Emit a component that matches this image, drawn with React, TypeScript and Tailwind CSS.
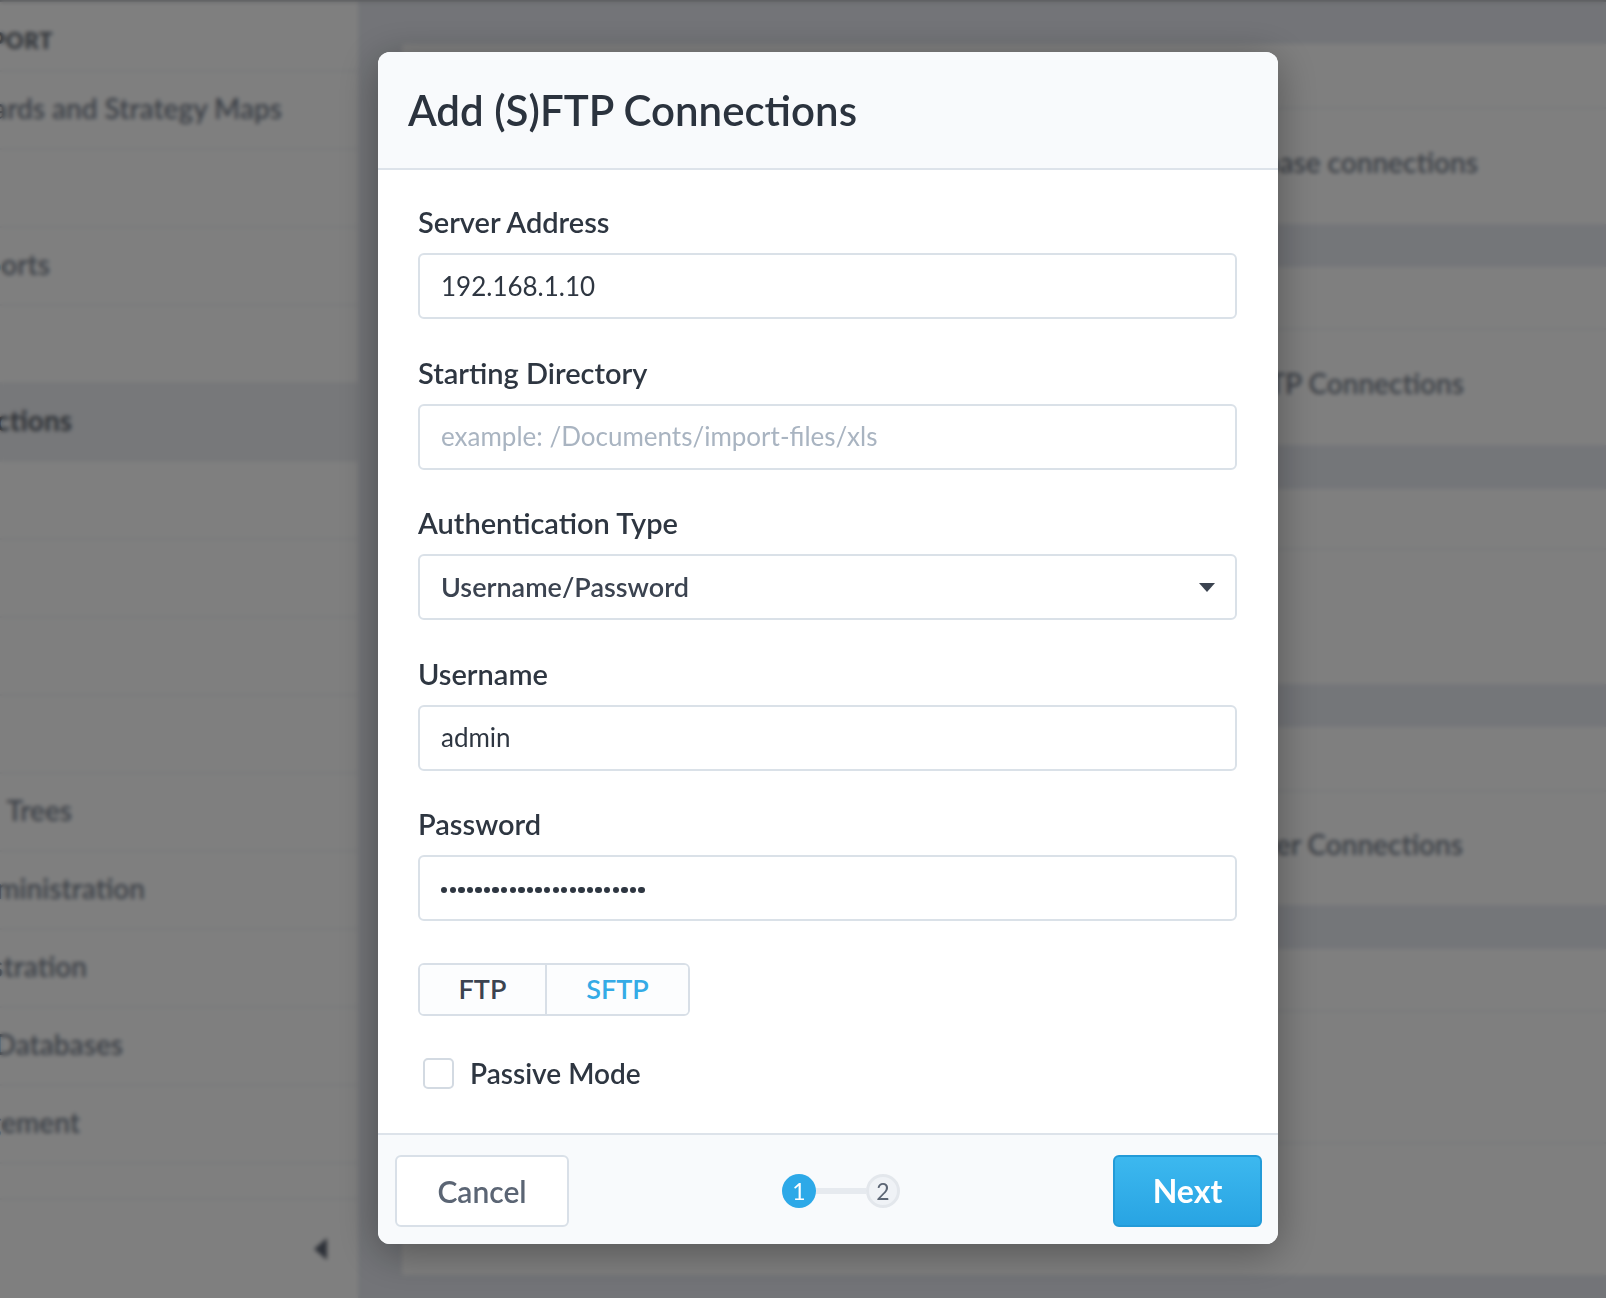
const sideRows = [
  { label: 'Dashboards and Strategy Maps', end: 'w-[282px]' },
  { label: '', end: '' },
  { label: 'Reports', end: 'w-[50px]' },
  { label: '', end: '' },
  { label: 'Connections', end: 'w-[72px]', active: true },
  { label: '', end: '' },
  { label: '', end: '' },
  { label: '', end: '' },
  { label: '', end: '' },
  { label: 'Portfolio Trees', end: 'w-[72px]' },
  { label: 'Administration', end: 'w-[145px]' },
  { label: 'Registration', end: 'w-[87px]' },
  { label: 'Linked Databases', end: 'w-[123px]' },
  { label: 'Management', end: 'w-[80px]' },
];

function Sidebar() {
  return (
    <aside className="w-[358px] h-full bg-white overflow-hidden flex flex-col shrink-0">
      <div className="h-[70px] border-b-2 border-[#f1f3f6] flex items-center pt-[8px]">
        <div className="w-[53px] flex justify-end whitespace-nowrap text-[22px] font-extrabold tracking-wide text-[#6a7079]">
          DATA IMPORT
        </div>
      </div>
      {sideRows.map((row, i) => (
        <div
          key={i}
          className={`h-[78px] border-b-2 border-[#f1f3f6] flex items-center pb-[5px] ${row.active ? 'bg-[#eef0f4]' : ''}`}
        >
          {row.label && (
            <div
              className={`${row.end} flex justify-end whitespace-nowrap text-[28px] ${
                row.active ? 'font-bold text-[#596069]' : 'font-semibold text-[#78818e]'
              }`}
            >
              {row.label}
            </div>
          )}
        </div>
      ))}
      <div className="h-[36px] border-b-2 border-[#f1f3f6]" />
      <div className="flex-1 flex items-start justify-end pr-[30px] pt-[38px]">
        <svg width="14" height="22" viewBox="0 0 14 22">
          <polygon points="13,0 13,22 0,11" fill="#5b6270" />
        </svg>
      </div>
    </aside>
  );
}

function PanelRow({ h, text, end, line = true }: { h: string; text?: string; end?: string; line?: boolean }) {
  return (
    <div className={`${h} ${line ? 'border-b-2 border-[#f1f3f6]' : ''} flex items-center ${text ? 'pb-[10px]' : ''}`}>
      {text && (
        <div className={`${end} flex justify-end whitespace-nowrap text-[28px] font-semibold text-[#78818e]`}>{text}</div>
      )}
    </div>
  );
}

function Band({ h }: { h: string }) {
  return <div className={`${h} bg-[#e9ecf3]`} />;
}

function Background() {
  return (
    <div className="flex h-full">
      <Sidebar />
      <main className="flex-1 bg-[#e6e9f0] pl-[44px] pt-[42px]">
        <div className="bg-white h-[1231px] flex flex-col rounded-tl-[4px]">
          <PanelRow h="h-[65px]" />
          <PanelRow h="h-[115px]" text="Database connections" end="w-[1076px]" line={false} />
          <Band h="h-[43px]" />
          <PanelRow h="h-[63px]" />
          <PanelRow h="h-[115px]" text="(S)FTP Connections" end="w-[1062px]" line={false} />
          <Band h="h-[44px]" />
          <PanelRow h="h-[61px]" />
          <PanelRow h="h-[134px]" line={false} />
          <Band h="h-[43px]" />
          <PanelRow h="h-[65px]" />
          <PanelRow h="h-[113px]" text="Server Connections" end="w-[1061px]" line={false} />
          <Band h="h-[44px]" />
          <PanelRow h="h-[63px]" />
          <PanelRow h="h-[132px]" />
          <PanelRow h="h-[131px]" line={false} />
        </div>
      </main>
    </div>
  );
}

function Label({ children }: { children: React.ReactNode }) {
  return <div className="leading-[36px] text-[29px] font-semibold text-[#2e3641] mb-[13px]">{children}</div>;
}

function Field({ label, children }: { label: string; children: React.ReactNode }) {
  return (
    <div className="mb-[35.5px]">
      <Label>{label}</Label>
      {children}
    </div>
  );
}

const inputBox =
  'h-[66px] w-full border-2 border-[#dae1e8] rounded-[6px] bg-white flex items-center px-[21px] text-[26px] text-[#2e3641]';

export default function App() {
  return (
    <div className="relative w-[1606px] h-[1298px] overflow-hidden font-[Lato,'Noto_Sans',sans-serif]">
      <div className="h-[2px] bg-[#b3b6bb]" />
      <div className="absolute inset-0 top-[2px]">
        <Background />
      </div>

      <div className="absolute inset-0 bg-black/50 backdrop-blur-[2px] pl-[378px] pt-[52px]">
        <div className="w-[900px] bg-white rounded-[12px] overflow-hidden shadow-[0_8px_40px_rgba(0,0,0,0.35)]">
          <header className="h-[118px] bg-[#f8fafc] border-b-2 border-[#dde3ea] flex items-center pl-[30px]">
            <h1 className="text-[42px] font-semibold text-[#2b333e]">Add (S)FTP Connections</h1>
          </header>

          <div className="pt-[34px] pb-[42px] pl-[40px] pr-[41px]">
            <Field label="Server Address">
              <div className={`${inputBox} text-[25px]`}>192.168.1.10</div>
            </Field>
            <Field label="Starting Directory">
              <div className={`${inputBox} text-[#a9b4c1]`}>example: /Documents/import-files/xls</div>
            </Field>
            <Field label="Authentication Type">
              <div className={`${inputBox} justify-between bg-[#fcfdfe] font-semibold text-[27px] text-[#3b4350]`}>
                <span>Username/Password</span>
                <svg width="16" height="9" viewBox="0 0 16 9" className="mr-[-1px]">
                  <polygon points="0,0 16,0 8,9" fill="#3b4350" />
                </svg>
              </div>
            </Field>
            <Field label="Username">
              <div className={inputBox}>admin</div>
            </Field>
            <div>
              <Label>Password</Label>
              <div className={`${inputBox} gap-[2.2px] pt-[4px]`}>
                {Array.from({ length: 24 }).map((_, i) => (
                  <span key={i} className="w-[6.4px] h-[6.4px] rounded-full bg-[#2e3641] shrink-0" />
                ))}
              </div>
            </div>

            <div className="mt-[42px] inline-flex h-[53px] border-2 border-[#d8dfe7] rounded-[6px] overflow-hidden text-[27px] font-semibold">
              <div className="w-[127px] flex items-center justify-center bg-[#fcfdfe] text-[#3b4350] border-r-2 border-[#d8dfe7]">
                FTP
              </div>
              <div className="w-[141px] flex items-center justify-center bg-[#fcfdfe] text-[#34abe6]">SFTP</div>
            </div>

            <label className="mt-[39px] h-[36px] flex items-center gap-[16px] pl-[5px]">
              <span className="w-[31px] h-[31px] border-2 border-[#d3dae2] rounded-[5px] bg-white" />
              <span className="text-[28px] font-semibold text-[#2e3641]">Passive Mode</span>
            </label>
          </div>

          <footer className="h-[111px] bg-[#f8fafc] border-t-2 border-[#dde3ea] flex items-center justify-between pl-[17px] pr-[16px] pt-[3px]">
            <button className="w-[174px] h-[72px] border-2 border-[#d9e0e8] rounded-[6px] bg-white text-[30px] font-semibold text-[#5b6574]">
              Cancel
            </button>
            <div className="flex items-center">
              <span className="w-[34px] h-[34px] rounded-full bg-[#2da9e8] text-white text-[23px] flex items-center justify-center">
                1
              </span>
              <span className="w-[50px] h-[6px] bg-[#e6eaef]" />
              <span className="w-[34px] h-[34px] rounded-full bg-[#eff2f6] border-[3px] border-[#e3e7ec] text-[#5b6574] text-[23px] flex items-center justify-center">
                2
              </span>
            </div>
            <button className="w-[149px] h-[72px] rounded-[6px] border-2 border-[#239bd8] bg-gradient-to-b from-[#3cb8ef] to-[#28a4e3] text-white text-[32px] font-bold">
              Next
            </button>
          </footer>
        </div>
      </div>
    </div>
  );
}
